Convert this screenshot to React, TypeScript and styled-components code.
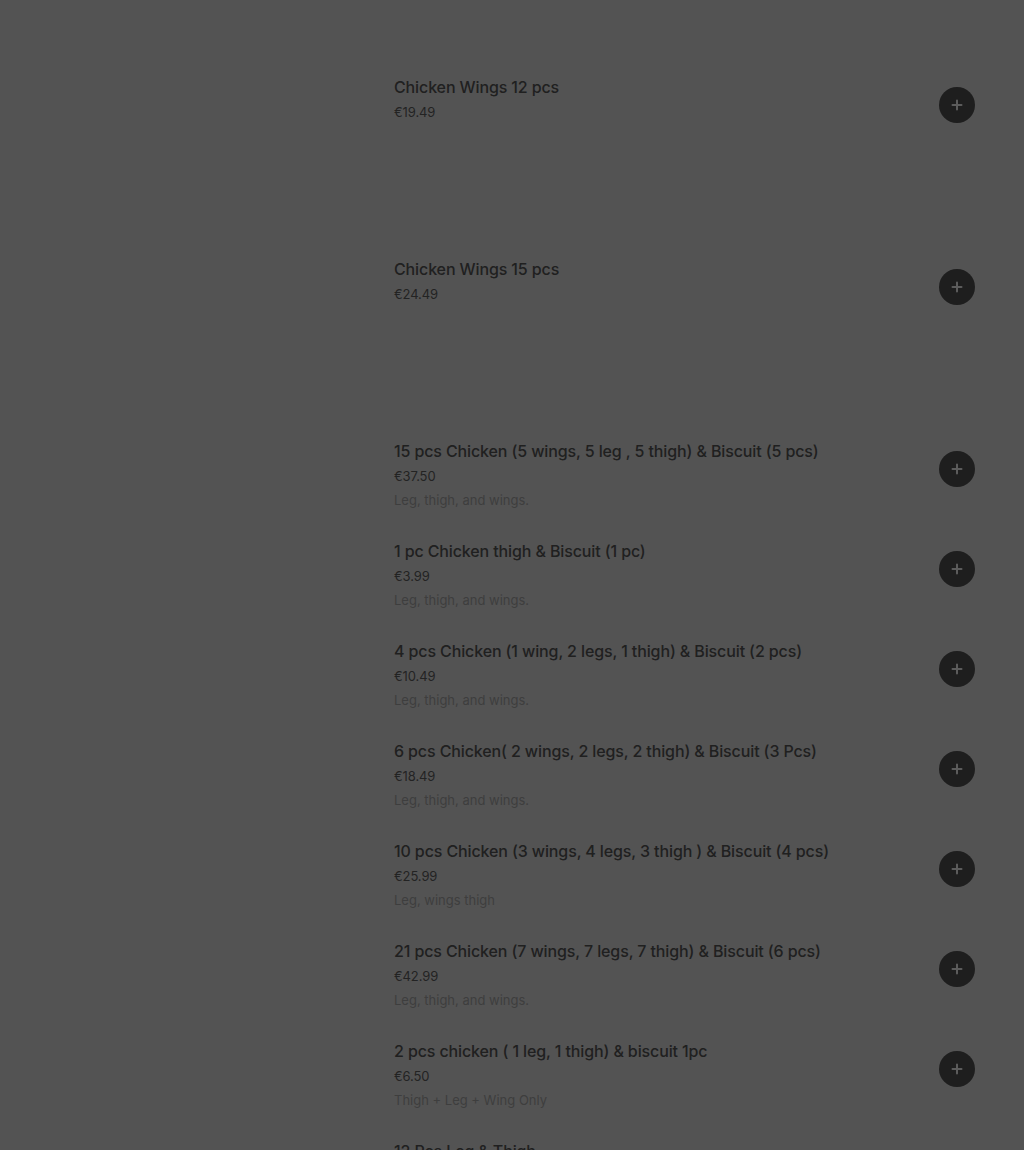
import React from 'react'
import { styled, createGlobalStyle } from 'styled-components'

type Item = {
  name: string
  price: string
  description?: string
  image?: boolean
}

const items: Item[] = [
  { name: 'Chicken Wings 12 pcs', price: '€19.49', image: true },
  { name: 'Chicken Wings 15 pcs', price: '€24.49', image: true },
  { name: '15 pcs Chicken (5 wings, 5 leg , 5 thigh) & Biscuit (5 pcs)', price: '€37.50', description: 'Leg, thigh, and wings.' },
  { name: '1 pc Chicken thigh & Biscuit (1 pc)', price: '€3.99', description: 'Leg, thigh, and wings.' },
  { name: '4 pcs Chicken (1 wing, 2 legs, 1 thigh) & Biscuit (2 pcs)', price: '€10.49', description: 'Leg, thigh, and wings.' },
  { name: '6 pcs Chicken( 2 wings, 2 legs, 2 thigh) & Biscuit (3 Pcs)', price: '€18.49', description: 'Leg, thigh, and wings.' },
  { name: '10 pcs Chicken (3 wings, 4 legs, 3 thigh ) & Biscuit (4 pcs)', price: '€25.99', description: 'Leg, wings thigh' },
  { name: '21 pcs Chicken (7 wings, 7 legs, 7 thigh) & Biscuit (6 pcs)', price: '€42.99', description: 'Leg, thigh, and wings.' },
  { name: '2 pcs chicken ( 1 leg, 1 thigh) & biscuit 1pc', price: '€6.50', description: 'Thigh + Leg + Wing Only' },
  { name: '12 Pcs Leg & Thigh', price: '€21.99', description: 'Leg, thigh.' },
]

const PlusIcon = () => (
  <svg width="12" height="12" viewBox="0 0 12 12" fill="none">
    <path d="M6 1.5v9M1.5 6h9" stroke="#5c5c5c" strokeWidth="2" strokeLinecap="round" />
  </svg>
)

export default function App() {
  return (
    <>
      <GlobalStyle />
      <Page>
        <List>
          {items.map((item) => (
            <Row key={item.name} $tall={!!item.image}>
              <Info>
                <Name>{item.name}</Name>
                <Price>{item.price}</Price>
                {item.description && <Description>{item.description}</Description>}
              </Info>
              <AddButton aria-label="Add">
                <PlusIcon />
              </AddButton>
            </Row>
          ))}
        </List>
      </Page>
    </>
  )
}

const GlobalStyle = createGlobalStyle`
  html, body {
    margin: 0;
    height: 1150px;
    overflow: hidden;
    background: #535353;
  }
  * {
    box-sizing: border-box;
  }
`

const Page = styled.div`
  min-height: 1150px;
  background: #535353;
  font-family: Inter, "Noto Sans", sans-serif;
  padding: 75px 49px 0 394px;
`

const List = styled.div`
  display: flex;
  flex-direction: column;
`

const Row = styled.div<{ $tall: boolean }>`
  display: flex;
  align-items: flex-start;
  justify-content: space-between;
  min-height: ${(p) => (p.$tall ? '182px' : '100px')};
`

const Info = styled.div`
  display: flex;
  flex-direction: column;
`

const Name = styled.div`
  font-size: 16px;
  font-weight: 500;
  line-height: 25px;
  color: #202020;
  letter-spacing: -0.12px;
`

const Price = styled.div`
  font-size: 13px;
  line-height: 24px;
  color: #232323;
  letter-spacing: -0.1px;
`

const Description = styled.div`
  font-size: 13px;
  line-height: 24px;
  color: #3e3e3e;
`

const AddButton = styled.button`
  margin-top: 12px;
  width: 36px;
  height: 36px;
  flex-shrink: 0;
  border: none;
  border-radius: 50%;
  background: #1e1e1e;
  display: flex;
  align-items: center;
  justify-content: center;
  padding: 0;
  cursor: pointer;
`
